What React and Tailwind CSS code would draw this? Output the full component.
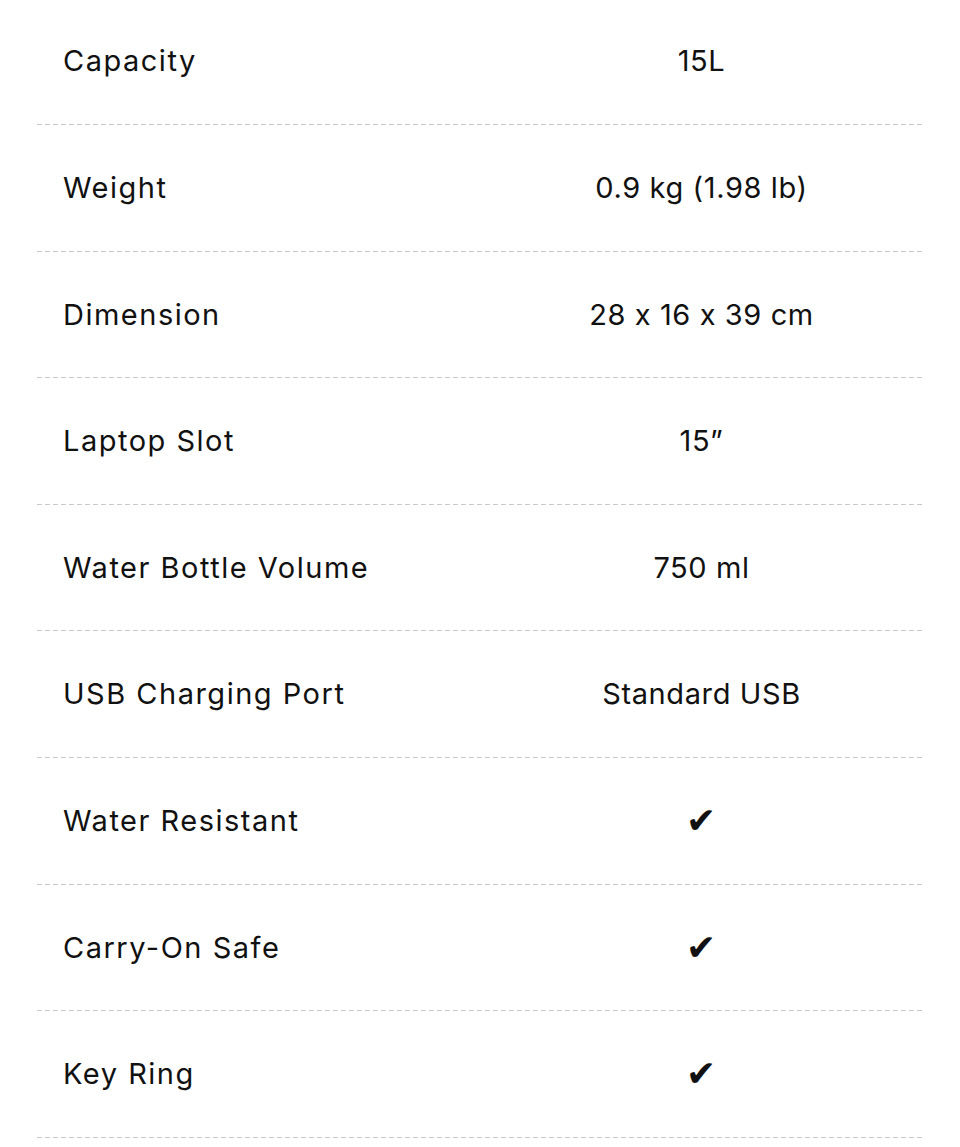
const specs = [
  { label: 'Capacity', value: '15L' },
  { label: 'Weight', value: '0.9 kg (1.98 lb)' },
  { label: 'Dimension', value: '28 x 16 x 39 cm' },
  { label: 'Laptop Slot', value: '15\u201D' },
  { label: 'Water Bottle Volume', value: '750 ml' },
  { label: 'USB Charging Port', value: 'Standard USB' },
  { label: 'Water Resistant', check: true },
  { label: 'Carry-On Safe', check: true },
  { label: 'Key Ring', check: true },
];

const App = () => {
  return (
    <div className="w-[960px] h-[1147px] bg-white overflow-hidden font-['Inter','Noto_Sans',sans-serif] text-[#111]">
      <div className="mx-[37px] -mt-[1.6px]">
        {specs.map((row) => (
          <div key={row.label}>
            <div className="grid grid-cols-2 items-center h-[125.6px]">
              <div className="pl-[26px] text-[29px] tracking-[1.5px]">{row.label}</div>
              <div className="text-center text-[29px] tracking-[0.6px]">
                {row.check ? (
                  <span className="inline-block font-['DejaVu_Sans',sans-serif] text-[36px] leading-none translate-y-[2px]">✔</span>
                ) : (
                  row.value
                )}
              </div>
            </div>
            {/* dashed divider */}
            <div className="h-px bg-[linear-gradient(to_right,#c8c8c8_5px,transparent_5px)] bg-[length:8px_1px] bg-repeat-x" />
          </div>
        ))}
      </div>
    </div>
  );
};

export default App;
